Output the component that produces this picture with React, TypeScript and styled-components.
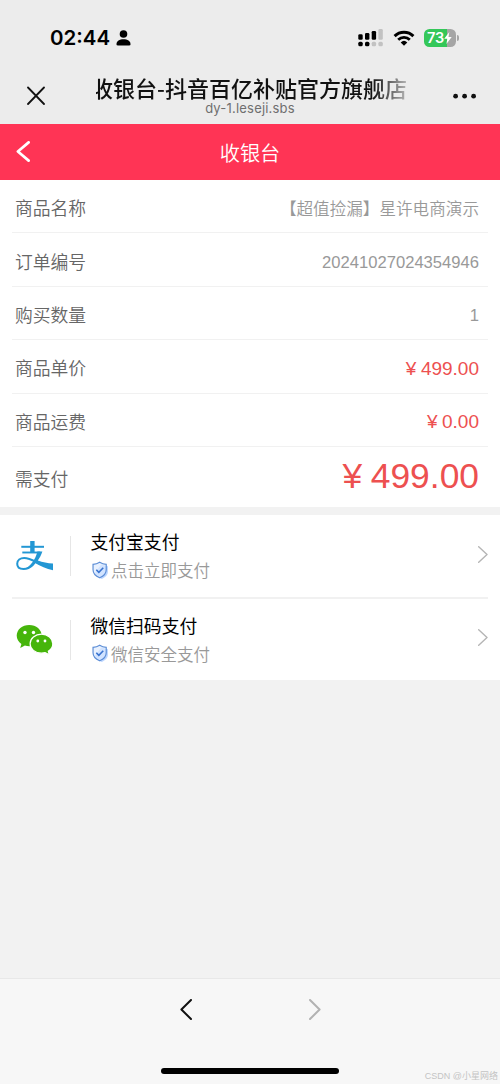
import React from 'react';
import styled, { createGlobalStyle } from 'styled-components';

const GlobalStyle = createGlobalStyle`
  * { box-sizing: border-box; }
  html, body { margin: 0; background: #f2f2f2; }
  body { font-family: "Liberation Sans", "Noto Sans CJK SC", sans-serif; }
  svg { display: block; flex: none; }
`;

const Screen = styled.div`
  width: 500px;
  height: 1084px;
  display: flex;
  flex-direction: column;
  overflow: hidden;
  background: #f2f2f2;
`;

const StatusBar = styled.div`
  height: 74px;
  flex: none;
  display: flex;
  align-items: center;
  padding: 1px 41px 0 50px;
  background: #ececec;
`;

const Clock = styled.span`
  width: 61px;
  margin-right: 5px;
  font: 600 20.5px/24px Inter, sans-serif;
  white-space: nowrap;
`;

const Indicators = styled.div`
  margin-left: auto;
  display: flex;
  align-items: center;
  gap: 9px;
`;

const Battery = styled.div`
  display: flex;
  align-items: center;
  gap: 1px;
`;

const BatteryBody = styled.div`
  width: 32px;
  height: 18px;
  border-radius: 5.5px;
  display: flex;
  align-items: center;
  padding-left: 3px;
  background: linear-gradient(90deg, #34c759 0 73%, #a5a5a5 73%);
  color: #fff;
  font: 600 14.5px/18px Inter, sans-serif;
  letter-spacing: -0.1px;
`;

const BatteryCap = styled.i`
  width: 2px;
  height: 6px;
  border-radius: 0 2px 2px 0;
  background: #a5a5a5;
`;

const BrowserBar = styled.div`
  height: 50px;
  flex: none;
  display: flex;
  justify-content: space-between;
  padding: 0 23px 0 27px;
  background: #ececec;
`;

const BrowserIcon = styled.div`
  padding-top: 12px;
`;

const PageInfo = styled.div`
  display: flex;
  flex-direction: column;
  align-items: center;
`;

const PageTitle = styled.div`
  white-space: nowrap;
  color: #111;
  font: 500 22px/27px "Noto Sans CJK SC", sans-serif;
  mask-image: linear-gradient(90deg, transparent 4.5px, #000 5px 89%, rgba(0, 0, 0, 0.25) 100%);
`;

const PageHost = styled.div`
  margin-top: -1px;
  padding-left: 2px;
  text-align: center;
  color: #6f6f6f;
  font: 400 13px/16px Inter, sans-serif;
  letter-spacing: 0.2px;
`;

const CashierHeader = styled.header`
  height: 56px;
  flex: none;
  display: grid;
  grid-template-columns: 60px 1fr 60px;
  align-items: center;
  background: #ff3455;
  color: #fff;
`;

const BackButton = styled.div`
  padding: 0 0 2px 16px;
`;

const Heading = styled.h1`
  margin: 0;
  padding-top: 1px;
  text-align: center;
  font: 350 20.2px/30px "Noto Sans CJK SC", sans-serif;
`;

const Details = styled.section`
  height: 327px;
  flex: none;
  padding: 0 12px;
  background: #fff;
`;

const DetailRow = styled.div<{ $total?: boolean }>`
  height: ${p => (p.$total ? '60px' : '53.4px')};
  padding: 0 9px 0 3px;
  display: flex;
  align-items: center;
  justify-content: space-between;
  border-bottom: ${p => (p.$total ? 'none' : '1px solid #f1f1f1')};
`;

const Label = styled.span<{ $low?: boolean }>`
  padding-top: ${p => (p.$low ? '3px' : '2px')};
  color: #666;
  font: 350 17.8px/26px "Noto Sans CJK SC", sans-serif;
`;

const Value = styled.span<{ $kind?: 'price' | 'total' }>`
  padding-top: ${p => (p.$kind === 'total' ? '0' : p.$kind === 'price' ? '4px' : '6px')};
  color: ${p => (p.$kind ? '#ed5050' : '#999')};
  font-size: ${p => (p.$kind === 'total' ? '35.4px' : p.$kind === 'price' ? '19px' : '16.6px')};
  font-weight: 350;
  line-height: 23px;
  white-space: nowrap;
`;

const Currency = styled.span`
  margin-right: 0.24em;
`;

const Methods = styled.section`
  height: 165px;
  flex: none;
  margin-top: 8px;
  padding: 0 12px;
  background: #fff;
`;

const Method = styled.div`
  height: 81px;
  display: flex;
  align-items: center;
  padding-left: 4px;

  &:first-child {
    height: 84px;
    border-bottom: 2px solid #f1f1f1;
  }

  & > svg { margin-bottom: 4px; }
`;

const MethodLogo = styled.div`
  width: 55px;
  height: 40px;
  display: flex;
  align-items: center;
  border-right: 1px solid #e6e6e6;
`;

const MethodText = styled.div`
  flex: 1;
  padding: 0 0 1px 19.5px;
`;

const MethodName = styled.div`
  color: #000;
  font: 400 17.8px/26px "Noto Sans CJK SC", sans-serif;
`;

const MethodNote = styled.div`
  display: flex;
  align-items: center;
  gap: 2.5px;
  margin-top: 3px;
  color: #999;
  font: 350 16.5px/26px "Noto Sans CJK SC", sans-serif;
`;

const BottomBar = styled.footer`
  height: 106px;
  margin-top: auto;
  flex: none;
  display: flex;
  flex-direction: column;
  align-items: center;
  border-top: 1px solid #e8e8e8;
  background: #f7f7f7;
`;

const NavButtons = styled.div`
  height: 61px;
  display: flex;
  align-items: center;
  gap: 117px;
`;

const FooterEnd = styled.div`
  width: 100%;
  flex: 1;
  display: grid;
  grid-template-columns: 161px 178px 1fr;
  align-items: end;
`;

const HomeIndicator = styled.div`
  grid-column: 2;
  height: 6px;
  margin-bottom: 10px;
  border-radius: 3px;
  background: #000;
`;

const Credit = styled.span`
  padding-right: 2px;
  text-align: right;
  color: #c4c4c4;
  font: 400 9px/16px "Liberation Sans", "Noto Sans CJK SC", sans-serif;
`;

const PersonIcon = () => (
  <svg width="15" height="16" viewBox="0 0 15 16">
    <circle cx="7.5" cy="4" r="3.8" />
    <path d="M.5 14.2c0-3.2 3-5 7-5s7 1.8 7 5c0 .8-.5 1.2-1.2 1.2H1.7c-.7 0-1.2-.4-1.2-1.2Z" />
  </svg>
);

const SignalIcon = () => (
  <svg width="26" height="18" viewBox="0 0 26 18">
    <rect x=".3" y="5.3" width="4.4" height="5.4" rx="1.3" />
    <rect x="7" y="4" width="4.4" height="6.7" rx="1.3" />
    <rect x="13.7" y="2" width="4.4" height="8.7" rx="1.3" />
    <rect x="20.4" y="0" width="4.4" height="10.7" rx="1.3" fill="#c2c2c2" />
    <rect x=".3" y="12.7" width="4.4" height="4.5" rx="1.5" />
    <rect x="7" y="12.7" width="4.4" height="4.5" rx="1.5" />
    <rect x="13.7" y="12.7" width="4.4" height="4.5" rx="1.5" fill="#c2c2c2" />
    <rect x="20.4" y="12.7" width="4.4" height="4.5" rx="1.5" fill="#c2c2c2" />
  </svg>
);

const WifiIcon = () => (
  <svg width="22" height="16" viewBox="0 0 22 16">
    <path d="M1.6 6.1a13.4 13.4 0 0 1 18.8 0" fill="none" stroke="#000" strokeWidth="3" />
    <path d="M5.2 9.7a8.3 8.3 0 0 1 11.6 0" fill="none" stroke="#000" strokeWidth="2.8" />
    <path d="M7.7 12.4a4.8 4.8 0 0 1 6.6 0L11 15.8Z" />
  </svg>
);

const BoltIcon = () => (
  <svg width="8" height="12" viewBox="0 0 8 12">
    <path d="M5.3 0 .2 6.7h3.1L2.4 12l5.3-7H4.5Z" fill="#fff" />
  </svg>
);

const CloseIcon = () => (
  <svg width="18" height="19" viewBox="0 0 18 19" fill="none" stroke="#111" strokeWidth="1.8" strokeLinecap="round">
    <path d="m1 1.5 16 16.5M17 1.5 1 18" />
  </svg>
);

const MoreIcon = () => (
  <svg width="24" height="20" viewBox="0 0 24 20" fill="#111">
    <circle cx="2.6" cy="10.2" r="2.4" />
    <circle cx="11.6" cy="10.2" r="2.4" />
    <circle cx="20.6" cy="10.2" r="2.4" />
  </svg>
);

type ChevronProps = { right?: boolean; w: number; h: number; color: string; stroke: number };

const Chevron = ({ right, w, h, color, stroke }: ChevronProps) => {
  const near = right ? stroke / 2 : w - stroke / 2;
  const tip = right ? w - stroke * 0.7 : stroke * 0.7;
  return (
    <svg width={w} height={h} viewBox={`0 0 ${w} ${h}`} fill="none" stroke={color} strokeWidth={stroke} strokeLinecap="round" strokeLinejoin="round">
      <path d={`M${near} ${stroke / 2} ${tip} ${h / 2} ${near} ${h - stroke / 2}`} />
    </svg>
  );
};

const AlipayLogo = () => (
  <svg width="38" height="32" viewBox="0 0 38 32">
    <g fill="none" stroke="#2397d4">
      <path d="M5.3 6.8h22.7" strokeWidth="2" />
      <path d="M16.4 1v11.5" strokeWidth="4.4" />
      <path d="M6.3 12.5h18" strokeWidth="1.9" />
      <path d="M23.7 12.2C21.5 19 16.5 29 7.4 29c-4 0-6.2-2-6.2-5.2 0-3.6 3-5.8 7-5.8 5.4 0 9 2.6 16 6" strokeWidth="2" />
    </g>
    <path d="M21.4 11.6h5c-1.2 3.6-2.8 6.6-4.6 9 5 1.9 9.7 2.7 15.2 2.9v6.8c-6.7-1.4-12.5-4.2-18-7.2-3.2 3.6-7 6-11.6 6.5 7-2.8 12-9.7 14-18Z" fill="#2397d4" />
  </svg>
);

const WechatLogo = () => (
  <svg width="38" height="32" viewBox="0 0 38 32">
    <path d="M13.2 1C6.2 1 .7 5.6.7 11.6c0 3.5 1.8 6.5 4.7 8.4L4.2 24l4.7-2.4c1.4.4 2.8.6 4.3.6 7 0 12.5-4.7 12.5-10.6S20.2 1 13.2 1Z" fill="#46b50b" />
    <path d="M25.5 10.2c-6.4 0-11.4 4.3-11.4 9.5s5 9.5 11.4 9.5c1.2 0 2.5-.2 3.6-.5l4.3 2.2-1.1-3.7c2.7-1.7 4.5-4.4 4.5-7.5 0-5.2-5-9.5-11.3-9.5Z" fill="#46b50b" stroke="#fff" strokeWidth="1.2" />
    <g fill="#fff">
      <circle cx="9" cy="8.5" r="1.7" />
      <circle cx="17.5" cy="8.5" r="1.7" />
      <circle cx="21.8" cy="17" r="1.4" />
      <circle cx="29" cy="17" r="1.4" />
    </g>
  </svg>
);

const ShieldIcon = () => (
  <svg width="18" height="19" viewBox="0 0 17 18">
    <path d="M9.6 3.3 16 5v5.3c0 3-2.5 5.2-5.7 6.7-3.3-1.2-6-3-6.6-5.7Z" fill="#bcd6ff" />
    <path d="M8.2 1.2c2 1.3 4.1 1.9 6.2 2v5.2c0 3.5-2.5 6.1-6.2 7.5-3.7-1.4-6.3-4-6.3-7.5V3.2c2.2-.1 4.3-.7 6.3-2Z" fill="#dbe9ff" fillOpacity=".65" stroke="#5b8dd6" strokeWidth="1.1" />
    <path d="m5 8.3 2.4 2.4 4.2-4.3" fill="none" stroke="#3973cf" strokeWidth="1.5" />
  </svg>
);

const methods = [
  { name: '支付宝支付', note: '点击立即支付', logo: <AlipayLogo /> },
  { name: '微信扫码支付', note: '微信安全支付', logo: <WechatLogo /> },
];

const details: { label: string; value: string; kind?: 'price' | 'total' }[] = [
  { label: '商品名称', value: '【超值捡漏】星许电商演示' },
  { label: '订单编号', value: '20241027024354946' },
  { label: '购买数量', value: '1' },
  { label: '商品单价', value: '499.00', kind: 'price' },
  { label: '商品运费', value: '0.00', kind: 'price' },
  { label: '需支付', value: '499.00', kind: 'total' },
];

export default function App() {
  return (
    <Screen>
      <GlobalStyle />
      <StatusBar>
        <Clock>02:44</Clock>
        <PersonIcon />
        <Indicators>
          <SignalIcon />
          <WifiIcon />
          <Battery>
            <BatteryBody>73<BoltIcon /></BatteryBody>
            <BatteryCap />
          </Battery>
        </Indicators>
      </StatusBar>
      <BrowserBar>
        <BrowserIcon><CloseIcon /></BrowserIcon>
        <PageInfo>
          <PageTitle>收银台-抖音百亿补贴官方旗舰店</PageTitle>
          <PageHost>dy-1.leseji.sbs</PageHost>
        </PageInfo>
        <BrowserIcon><MoreIcon /></BrowserIcon>
      </BrowserBar>
      <CashierHeader>
        <BackButton><Chevron w={14} h={21} color="#fff" stroke={2.7} /></BackButton>
        <Heading>收银台</Heading>
      </CashierHeader>
      <Details>
        {details.map(d => (
          <DetailRow key={d.label} $total={d.kind === 'total'}>
            <Label $low={d.kind === 'total'}>{d.label}</Label>
            <Value $kind={d.kind}>
              {d.kind && <Currency>{'\u00A5'}</Currency>}
              {d.value}
            </Value>
          </DetailRow>
        ))}
      </Details>
      <Methods>
        {methods.map(m => (
          <Method key={m.name}>
            <MethodLogo>{m.logo}</MethodLogo>
            <MethodText>
              <MethodName>{m.name}</MethodName>
              <MethodNote><ShieldIcon />{m.note}</MethodNote>
            </MethodText>
            <Chevron right w={10} h={17} color="#b5b5b5" stroke={1.4} />
          </Method>
        ))}
      </Methods>
      <BottomBar>
        <NavButtons>
          <Chevron w={12} h={21} color="#111" stroke={2} />
          <Chevron right w={12} h={21} color="#b2b2b2" stroke={2} />
        </NavButtons>
        <FooterEnd>
          <HomeIndicator />
          <Credit>CSDN @小星网络</Credit>
        </FooterEnd>
      </BottomBar>
    </Screen>
  );
}
